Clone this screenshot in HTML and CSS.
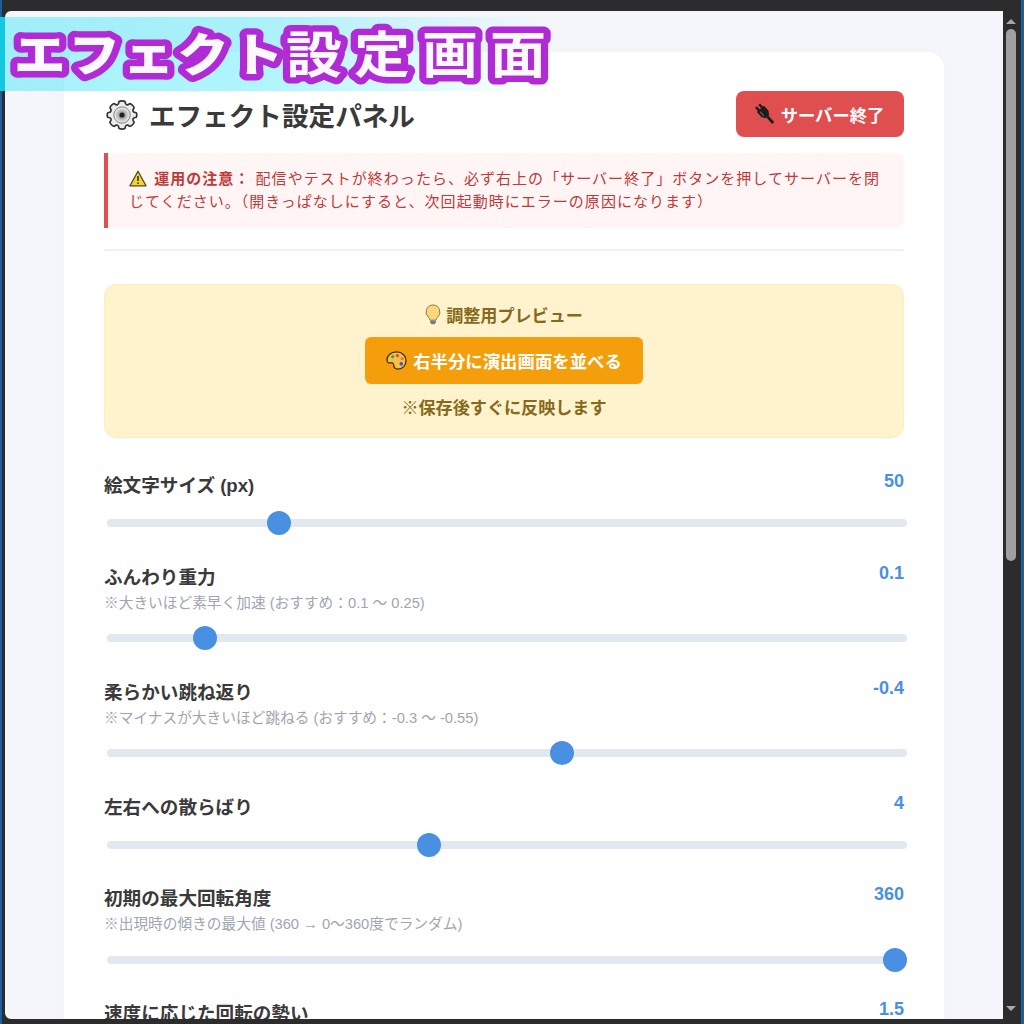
FILE: index.html
```html
<!DOCTYPE html>
<html lang="ja">
<head>
<meta charset="utf-8">
<title>エフェクト設定画面</title>
<link rel="stylesheet" href="styles.css">
</head>
<body>
<div class="desktop">
  <div class="window">
    <main class="viewport">
      <section class="card">
        <header class="panel-head">
          <h1 class="panel-title">
            <svg class="ico-gear" viewBox="0 0 32 32"><defs><radialGradient id="gg"><stop offset="0" stop-color="#777"/><stop offset="1" stop-color="#f4f4f4"/></radialGradient></defs><path d="M12.800 3.200c0-1.700 6.400-1.700 6.400 0 0 2.500 2.300 3.500 4.100 1.700 1.200-1.200 5.700 3.300 4.500 4.500-1.800 1.800-.8 4.100 1.700 4.100 1.700 0 1.700 5 0 5-2.500 0-3.500 2.300-1.700 4.100 1.200 1.200-3.300 5.700-4.500 4.500-1.800-1.800-4.100-.8-4.100 1.700 0 1.700-6.400 1.700-6.400 0 0-2.500-2.300-3.500-4.100-1.700-1.200 1.200-5.700-3.300-4.500-4.500 1.800-1.800.8-4.100-1.700-4.100-1.700 0-1.700-5 0-5 2.500 0 3.500-2.300 1.700-4.100-1.200-1.200 3.300-5.700 4.500-4.500 1.800 1.800 4.100.8 4.100-1.700z" fill="#ececec" stroke="#333" stroke-width="1.700" stroke-linejoin="round"/><circle cx="16" cy="16" r="8.200" fill="url(#gg)" stroke="#666" stroke-width=".8"/><circle cx="16" cy="16" r="2.600" fill="#222"/></svg>
            <span>エフェクト設定パネル</span>
          </h1>
          <button class="btn-stop" type="button">
            <svg class="ico-plug" viewBox="0 0 20 22"><g transform="rotate(-42 10 11)"><rect x="6.500" y="-1.500" width="2.500" height="5" fill="#1c1c1c"/><rect x="11" y="-1.500" width="2.500" height="5" fill="#1c1c1c"/><path d="M5 3h10v7l-2.500 4h-5L5 10z" fill="#1c1c1c"/><rect x="7" y="5" width="1.400" height="6" fill="#5a5a5a"/><rect x="8.500" y="14" width="3" height="9" fill="#1c1c1c"/></g></svg>
            <span>サーバー終了</span>
          </button>
        </header>

        <aside class="notice">
          <svg class="ico-warn" viewBox="0 0 18 17"><path d="M9 1.200 17 15.800H1z" fill="#f6d32d" stroke="#4a4a20" stroke-width="1.300" stroke-linejoin="round"/><path d="M9 6v5" stroke="#333" stroke-width="1.600"/><circle cx="9" cy="13.200" r=".9" fill="#333"/></svg>
          <strong>運用の注意：</strong> 配信やテストが終わったら、必ず右上の「サーバー終了」ボタンを押してサーバーを閉じてください。（開きっぱなしにすると、次回起動時にエラーの原因になります）
        </aside>

        <hr class="divider">

        <section class="preview">
          <p class="preview-title">
            <svg class="ico-bulb" viewBox="0 0 16 21"><path d="M8 1a7 7 0 0 0-4.400 12.400c.9.800 1.300 1.800 1.400 2.800h6c.1-1 .5-2 1.400-2.800A7 7 0 0 0 8 1z" fill="#fbd77a" stroke="#8a7a50" stroke-width="1"/><path d="M5.200 16.800h5.600V18.500l-1.300 1.800h-3l-1.300-1.800z" fill="#6d7b90"/></svg>
            <span>調整用プレビュー</span>
          </p>
          <button class="btn-preview" type="button">
            <svg class="ico-palette" viewBox="0 0 22 20"><path d="M11 1C5 1 1 4.800 1 9.500 1 12 2.800 13 4.500 12.500c1.800-.5 3.500.2 3.500 2 0 2.500 1.500 4.500 4.500 4.500C17.500 19 21 15 21 10S17 1 11 1z" fill="#f5c04a" stroke="#3d2a10" stroke-width="1.300"/><circle cx="7" cy="6" r="1.700" fill="#3da35a"/><circle cx="12" cy="4.800" r="1.700" fill="#e0453a"/><circle cx="17" cy="8" r="1.700" fill="#e8793a"/><circle cx="16" cy="13.500" r="1.900" fill="#3a55c8"/></svg>
            <span>右半分に演出画面を並べる</span>
          </button>
          <p class="preview-note">※保存後すぐに反映します</p>
        </section>

        <div class="field">
          <div class="field-head"><div class="field-label">絵文字サイズ (px)</div><div class="field-value">50</div></div>
          <input class="slider" type="range" min="10" max="204" value="50" step="1">
        </div>

        <div class="field">
          <div class="field-head"><div class="field-label">ふんわり重力<small class="hint">※大きいほど素早く加速 (おすすめ：0.1 ～ 0.25)</small></div><div class="field-value">0.1</div></div>
          <input class="slider" type="range" min="0.01" max="0.82" value="0.1" step="0.01">
        </div>

        <div class="field">
          <div class="field-head"><div class="field-label">柔らかい跳ね返り<small class="hint">※マイナスが大きいほど跳ねる (おすすめ：-0.3 ～ -0.55)</small></div><div class="field-value">-0.4</div></div>
          <input class="slider" type="range" min="-1" max="0.05" value="-0.4" step="0.01">
        </div>

        <div class="field">
          <div class="field-head"><div class="field-label">左右への散らばり</div><div class="field-value">4</div></div>
          <input class="slider" type="range" min="0" max="10" value="4" step="1">
        </div>

        <div class="field">
          <div class="field-head"><div class="field-label">初期の最大回転角度<small class="hint">※出現時の傾きの最大値 (360 → 0～360度でランダム)</small></div><div class="field-value">360</div></div>
          <input class="slider" type="range" min="0" max="360" value="360" step="1">
        </div>

        <div class="field">
          <div class="field-head"><div class="field-label">速度に応じた回転の勢い</div><div class="field-value">1.5</div></div>
        </div>
      </section>
    </main>
    <div class="scrollbar">
      <span class="arrow-up"></span>
      <div class="scroll-thumb"></div>
      <span class="arrow-down"></span>
    </div>
  </div>
</div>
<div class="banner">
  <svg class="banner-art" viewBox="0 0 560 74">
    <text class="banner-text" x="12.500" y="56"><tspan class="kana" dy="-2">エフェクト</tspan><tspan dy="2">設定画面</tspan></text>
  </svg>
</div>
</body>
</html>
```
FILE: styles.css
```css
* { box-sizing: border-box; }
html, body { margin: 0; height: 1024px; overflow: hidden; }
body {
  background: #2c2c2c;
  font-family: "Liberation Sans", "Noto Sans CJK JP", sans-serif;
  color: #333;
  position: relative;
}
.desktop {
  height: 1024px;
  padding: 11px 5px 5px 5px;
  background: linear-gradient(90deg, #1d5f9e 0, #1d5f9e 2px, #2c2c2c 2px, #2c2c2c 1021px, #1d5f9e 1021px);
}
.window { display: flex; height: 1008px; }
.viewport {
  width: 998px;
  flex: none;
  background: #f4f6fb;
  border-radius: 6px 0 0 6px;
  overflow: hidden;
  padding: 41px 0 0 59px;
}
.card {
  width: 880px;
  min-height: 1000px;
  background: #fff;
  border-radius: 16px;
  padding: 39px 40px 40px;
  box-shadow: 0 4px 20px rgba(0,0,0,.02);
}
.panel-head { display: flex; justify-content: space-between; align-items: center; height: 46px; }
.panel-title { display: flex; align-items: center; gap: 11px; margin: 0; padding-left: 2px; font-size: 26.6px; font-weight: 700; color: #3a3a3a; }
.ico-gear { width: 32px; height: 32px; position: relative; top: 1px; }
.btn-stop {
  display: flex; align-items: center; justify-content: center; gap: 6px;
  width: 168px; height: 46px;
  background: #e04f50; color: #fff;
  border: 0; border-radius: 8px;
  font: 700 17.3px "Liberation Sans", "Noto Sans CJK JP", sans-serif;
}
.ico-plug { width: 19px; height: 21px; overflow: visible; }
.notice {
  margin-top: 16px;
  height: 75px;
  padding: 14px 20px 0 21px;
  background: #fff5f5;
  border-left: 4px solid #e04f50;
  border-radius: 0 8px 8px 0;
  color: #c0393b;
  font-size: 15px;
  line-height: 23px;
  letter-spacing: 1.03px;
}
.notice strong { font-weight: 700; }
.ico-warn { width: 18px; height: 17px; vertical-align: -3px; margin-right: 2px; }
.divider { margin: 21px 0 33px; border: 0; border-top: 2px solid #edf2f7; }
.preview {
  height: 154px;
  padding: 17px 0 0;
  background: #fff3cd;
  border: 1px solid #ffeeba;
  border-radius: 12px;
  display: flex; flex-direction: column; align-items: center;
  color: #87691c;
  font-weight: 700;
  font-size: 17.1px;
}
.preview p { margin: 0; }
.preview-title { display: flex; align-items: center; gap: 5px; height: 24px; }
.ico-bulb { width: 16px; height: 21px; }
.btn-preview {
  display: flex; align-items: center; justify-content: center; gap: 6px;
  margin-top: 11px;
  width: 278px; height: 47px;
  background: #f59e0b; color: #fff;
  border: 0; border-radius: 6px;
  font: 700 17.4px "Liberation Sans", "Noto Sans CJK JP", sans-serif;
}
.ico-palette { width: 21px; height: 19px; }
.preview .preview-note { margin-top: 13px; line-height: 24px; }
.field { margin-top: 36px; }
.field + .field { margin-top: 30.5px; }
.field-head { display: flex; justify-content: space-between; align-items: flex-start; }
.field-label { font-size: 18.6px; font-weight: 700; color: #3a3a3a; line-height: 24px; }
.field-value { font-size: 18px; font-weight: 700; color: #4a90e2; line-height: 15px; }
.hint { display: block; font-size: 14.7px; font-weight: 400; color: #a0a5b2; line-height: 20.5px; margin-top: 3px; }
.slider {
  display: block;
  -webkit-appearance: none;
  appearance: none;
  width: 100%;
  height: 24px;
  margin: 13px 3px 0;
  background: transparent;
}
.slider::-webkit-slider-runnable-track { height: 8px; background: #e2e8f0; border-radius: 4px; }
.slider::-webkit-slider-thumb {
  -webkit-appearance: none;
  width: 24px; height: 24px;
  margin-top: -8px;
  border-radius: 50%;
  background: #4a90e2;
}
.scrollbar {
  flex: 1;
  width: 16px;
  background: #2c2c2c;
  display: flex; flex-direction: column; align-items: center;
  padding: 8px 0;
}
.arrow-up { width: 0; height: 0; border: 5px solid transparent; border-top: 0; border-bottom: 5px solid #a8a8a8; }
.arrow-down { width: 0; height: 0; border: 5px solid transparent; border-bottom: 0; border-top: 5px solid #a8a8a8; margin-top: auto; }
.scroll-thumb { width: 10px; height: 532px; margin-top: 5px; border-radius: 5px; background: #a0a0a0; }
.banner {
  position: absolute;
  left: 0; top: 17px;
  width: 540px; height: 74px;
  background: linear-gradient(90deg, #12c9e2 0, #12c9e2 5px, rgba(90,232,248,.55) 5px, rgba(100,235,250,.5) 50%, rgba(180,240,255,0) 100%);
}
.banner-art { display: block; width: 560px; height: 74px; overflow: visible; }
.banner-text {
  font-family: "Noto Sans CJK JP", sans-serif;
  font-weight: 700;
  font-size: 50px;
  letter-spacing: 10.7px;
  fill: #fbf8ff;
  stroke: #b02bd6;
  stroke-width: 13px;
  stroke-linejoin: round;
  paint-order: stroke fill;
  transform: scaleX(1.12);
}
.kana { font-size: 46px; letter-spacing: 2.600px; font-weight: 900; }
```
